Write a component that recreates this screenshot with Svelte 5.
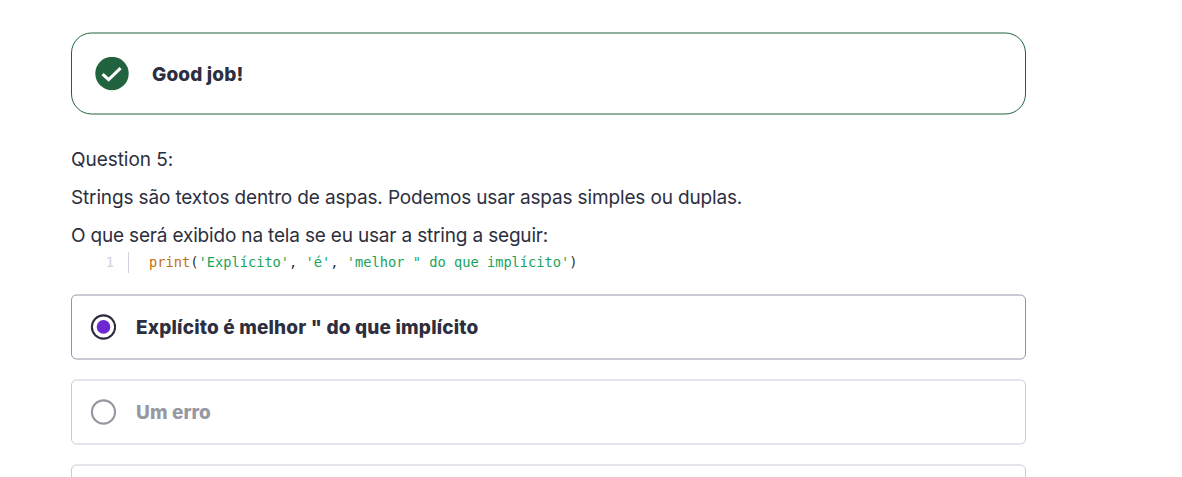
<script>
  const options = [
    { label: 'Explícito é melhor " do que implícito', checked: true, spacing: '0.18px' },
    { label: 'Um erro', checked: false, spacing: '0.1px' },
    { label: '', checked: false, spacing: '0' }
  ];
</script>

{#snippet frame(height, radius)}
  <svg class="frame" width="955" height={height + 2} viewBox="0 0 955 {height + 2}" aria-hidden="true">
    <rect x="0.5" y="1" width="954" {height} rx={radius} />
  </svg>
{/snippet}

<main>
  <section class="feedback">
    {@render frame(81, 20)}
    <div class="message">
      <svg width="34" height="34" viewBox="0 0 34 34" aria-hidden="true">
        <circle cx="17" cy="16.5" r="16.7" fill="#22633f" />
        <path d="M7.6 17.2 13.6 22.7 25.6 11.2" fill="none" stroke="#fff" stroke-width="3.1" />
      </svg>
      <strong>Good job!</strong>
    </div>
  </section>

  <section class="question">
    <p class="title">Question 5:</p>
    <p class="intro">Strings são textos dentro de aspas. Podemos usar aspas simples ou duplas.</p>
    <p class="ask">O que será exibido na tela se eu usar a string a seguir:</p>
    <div class="code">
      <span class="number">1</span>
      <code><span class="fn">print</span>(<span class="str">'Explícito'</span>, <span class="str">'é'</span>, <span class="str">'melhor " do que implícito'</span>)</code>
    </div>
  </section>

  <section class="options">
    {#each options as option}
      <div class="option" class:checked={option.checked}>
        {@render frame(64, 5)}
        <div class="choice">
          <svg class="radio" width="26" height="26" viewBox="0 0 26 26" aria-hidden="true">
            <circle class="ring" cx="13.5" cy="13" r="11.6" />
            {#if option.checked}
              <circle cx="13.5" cy="12.9" r="6.8" fill="#6d28d2" />
            {/if}
          </svg>
          <span class="label" style="letter-spacing: {option.spacing}">{option.label}</span>
        </div>
      </div>
    {/each}
  </section>
</main>

<style>
  :global(body) {
    margin: 0;
    background: #fff;
    overflow: hidden;
  }
  main {
    box-sizing: border-box;
    height: 477px;
    overflow: hidden;
    padding: 32px 0 0 71px;
    font-family: Inter, "Noto Sans", sans-serif;
    font-size: 19px;
    color: #2d2f40;
  }
  .feedback,
  .option {
    display: grid;
    width: 955px;
  }
  .frame,
  .message,
  .choice {
    grid-area: 1 / 1;
  }
  .frame {
    display: block;
  }
  .frame rect {
    fill: none;
    stroke: #22633f;
    stroke-width: 1;
  }
  .message {
    display: flex;
    align-items: center;
    gap: 23px;
    padding-left: 24px;
  }
  .message strong {
    padding-top: 2px;
    font-weight: 800;
    letter-spacing: 0.14px;
  }
  .question {
    display: flex;
    flex-direction: column;
    height: 179px;
    padding-top: 26px;
    box-sizing: border-box;
  }
  p {
    margin: 0;
    line-height: 38px;
    height: 38px;
    white-space: nowrap;
  }
  .title {
    letter-spacing: -0.05px;
  }
  .intro {
    letter-spacing: -0.147px;
  }
  .ask {
    letter-spacing: -0.175px;
  }
  .code {
    display: flex;
    align-items: center;
    height: 21px;
    margin-top: -3px;
    font-family: "DejaVu Sans Mono", monospace;
    font-size: 13.7px;
    line-height: 21px;
  }
  .number {
    box-sizing: border-box;
    width: 58px;
    padding-right: 14px;
    border-right: 1px solid #d1d2e0;
    text-align: right;
    color: #d1d2e0;
  }
  code {
    padding-left: 20px;
    font: inherit;
    white-space: pre;
  }
  .fn {
    color: #c4710d;
  }
  .str {
    color: #19a35b;
  }
  .options {
    display: flex;
    flex-direction: column;
    gap: 19px;
  }
  .option .frame rect {
    stroke: #c9cad8;
  }
  .option.checked .frame rect {
    stroke: #9194ac;
  }
  .choice {
    display: flex;
    align-items: center;
    gap: 20px;
    padding-left: 19px;
    font-weight: 800;
    color: #9698a3;
  }
  .checked .choice {
    color: #2d2f40;
  }
  .ring {
    fill: none;
    stroke: #9698a3;
    stroke-width: 2.1;
  }
  .checked .ring {
    stroke: #2d2f40;
  }
</style>
